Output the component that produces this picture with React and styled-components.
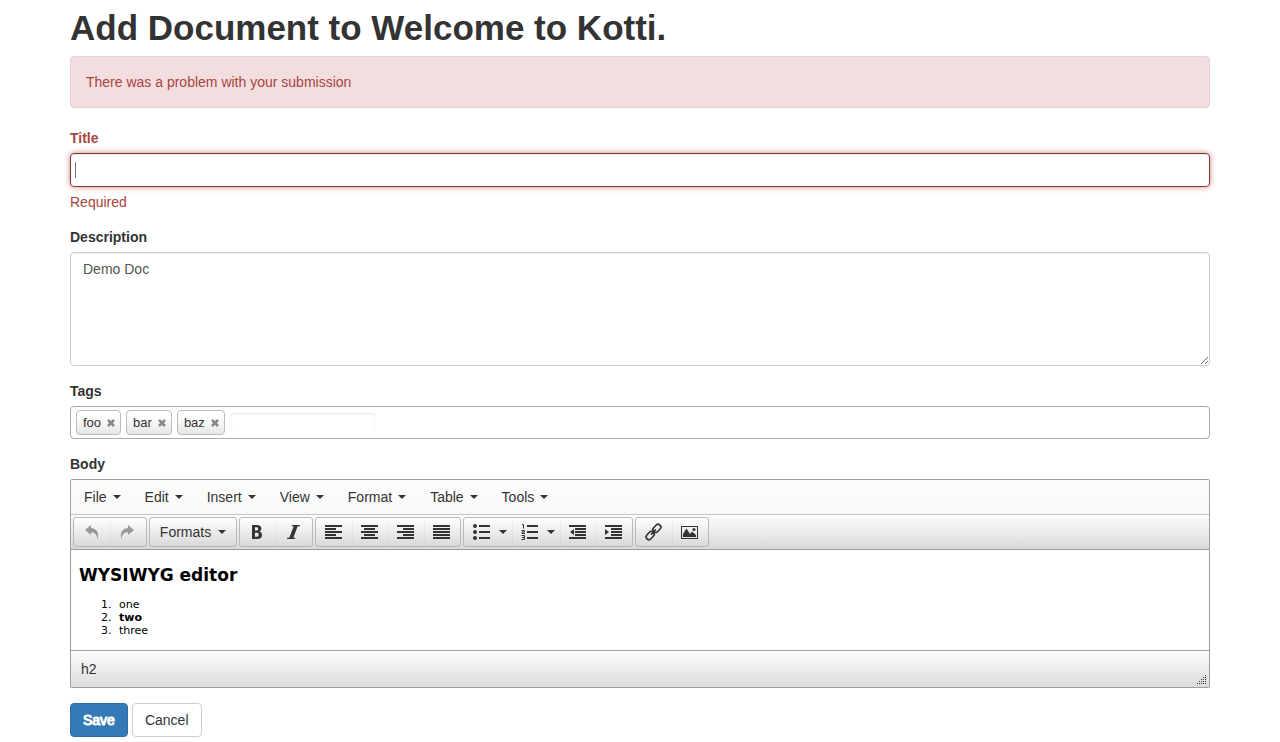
import React from "react";
import styled, { createGlobalStyle, css } from "styled-components";

const Global = createGlobalStyle`
  *, *::before, *::after { box-sizing: border-box; }
  body {
    margin: 0;
    background: #fff;
    color: #333;
    font-family: "Helvetica Neue", Helvetica, "Liberation Sans", Arial, sans-serif;
    font-size: 14px;
    line-height: 20px;
  }
  button, input, textarea { font-family: inherit; }
`;

const Container = styled.main`
  max-width: 1170px;
  margin: 0 auto;
  padding: 8px 15px 5px;
`;

const PageTitle = styled.h1`
  margin: 0 0 8px;
  font-size: 35px;
  line-height: 40px;
  font-weight: 700;
`;

const Alert = styled.div`
  margin-bottom: 20px;
  padding: 15px;
  border: 1px solid #ebccd1;
  border-radius: 4px;
  background: #f2dede;
  color: #a94442;
`;

const Group = styled.div`
  margin-bottom: 15px;
`;

const Label = styled.label`
  display: block;
  margin-bottom: 5px;
  font-weight: 700;
  color: ${(p) => (p.$error ? "#a94442" : "#333")};
`;

const Help = styled.p`
  margin: 5px 0 0;
  color: #a94442;
`;

const TitleField = styled.div`
  display: flex;
  align-items: center;
  height: 34px;
  padding: 0 4px;
  border: 1px solid #843534;
  border-radius: 4px;
  box-shadow: inset 0 1px 1px rgba(0, 0, 0, 0.075), 0 0 6px #ce8483;
`;

const Caret = styled.span`
  width: 1px;
  height: 16px;
  background: #777;
`;

const TitleInput = styled.input`
  flex: 1;
  min-width: 0;
  padding: 0;
  border: 0;
  outline: 0;
  background: transparent;
  color: #555;
  font-size: 14px;
`;

const TextArea = styled.textarea`
  display: block;
  width: 100%;
  height: 114px;
  padding: 6px 12px;
  border: 1px solid #ccc;
  border-radius: 4px;
  box-shadow: inset 0 1px 1px rgba(0, 0, 0, 0.075);
  color: #555;
  font-size: 14px;
  line-height: 20px;
  resize: vertical;
`;

const TagBox = styled.div`
  display: flex;
  align-items: center;
  gap: 5px;
  height: 33px;
  padding: 0 5px;
  border: 1px solid #aaa;
  border-radius: 4px;
`;

const Tag = styled.span`
  display: flex;
  align-items: center;
  gap: 6px;
  height: 25px;
  padding: 0 5px 0 6px;
  border: 1px solid #bbb;
  border-radius: 4px;
  background: linear-gradient(#fff 20%, #e6e6e6);
  font-size: 13px;
`;

const TagRemove = styled.button`
  display: flex;
  padding: 0;
  border: 0;
  background: none;
  color: #888;
`;

const TagInput = styled.input`
  width: 145px;
  height: 19px;
  border: 0;
  border-radius: 3px;
  outline: 0;
  box-shadow: inset 0 1px 2px rgba(0, 0, 0, 0.1);
  font-size: 13px;
`;

const Editor = styled.div`
  border: 1px solid #9e9e9e;
  border-radius: 2px;
`;

const MenuBar = styled.div`
  display: flex;
  height: 35px;
  padding: 0 1px;
  border-bottom: 1px solid #c4c4c4;
  background: linear-gradient(#fdfdfd, #f8f8f8);
`;

const MenuButton = styled.button`
  display: flex;
  align-items: center;
  gap: 6px;
  padding: 0 12px;
  border: 0;
  background: none;
  color: #333;
  font-size: 14px;
  line-height: 20px;
`;

const ToolBar = styled.div`
  display: flex;
  gap: 2px;
  padding: 2px;
  border-bottom: 1px solid #9e9e9e;
  background: linear-gradient(#fdfdfd, #d9d9d9);
`;

const ButtonGroup = styled.div`
  display: flex;
  height: 30px;
  border: 1px solid #b8b8b8;
  border-radius: 3px;
  background: linear-gradient(#fff, #d9d9d9);
`;

const sizes = {
  icon: css`width: 36px; padding-right: 1px;`,
  split: css`width: 48px; gap: 9px; padding-left: 4px;`,
  text: css`width: 86px;`,
};

const ToolButton = styled.button`
  display: flex;
  align-items: center;
  justify-content: center;
  gap: 7px;
  padding: 0;
  border: 0;
  background: none;
  color: #333;
  font-size: 14px;
  line-height: 20px;
  ${(p) => sizes[p.$size || "icon"]}
  &:disabled { color: #999; }
  & + & { box-shadow: inset 1px 0 rgba(0, 0, 0, 0.03); }
`;

const Content = styled.div`
  min-height: 100px;
  padding: 15px 8px 12px;
  background: #fff;
  color: #000;
  font-family: Verdana, "DejaVu Sans", sans-serif;
  font-size: 11px;
  line-height: 13px;
`;

const DocHeading = styled.h2`
  margin: 0 0 13px;
  font-size: 17px;
  line-height: 20px;
`;

const DocList = styled.ol`
  margin: 0;
  padding-left: 36px;
`;

const DocItem = styled.li`
  padding-left: 4px;
`;

const StatusBar = styled.div`
  display: flex;
  align-items: center;
  justify-content: space-between;
  height: 37px;
  padding: 0 3px 0 10px;
  border-top: 1px solid #9e9e9e;
  background: linear-gradient(#fdfdfd, #dcdcdc);
`;

const Grip = styled.svg`
  align-self: flex-end;
  margin-bottom: 3px;
`;

const Actions = styled.div`
  display: flex;
  gap: 4px;
`;

const Button = styled.button`
  height: 34px;
  padding: 0 12px;
  border: 1px solid ${(p) => (p.$primary ? "#2e6da4" : "#ccc")};
  border-radius: 4px;
  background: ${(p) => (p.$primary ? "#337ab7" : "#fff")};
  color: ${(p) => (p.$primary ? "#fff" : "#333")};
  font-size: 14px;
  line-height: 20px;
  -webkit-text-stroke: ${(p) => (p.$primary ? "1px #fff" : "0")};
`;

const Arrow = () => (
  <svg width="8" height="4" viewBox="0 0 8 4" fill="currentColor" aria-hidden="true">
    <path d="M0 0h8L4 4z" />
  </svg>
);

const icons = {
  undo: <path d="M2 6 8 1v3c5 .2 9 4.500 6.300 11.500C14.300 11.500 12.500 8.300 8 8.300V11z" />,
  redo: <path d="M15 6 9 1v3c-5 .2-9 4.500-6.300 11.500C2.700 11.500 4.500 8.300 9 8.300V11z" />,
  bold: (
    <path fillRule="evenodd" d="M3 1h5c2.800 0 4.300 1.200 4.300 3.600 0 1.500-.7 2.500-1.900 3C12 8.100 13 9.300 13 11c0 2.600-1.700 4-4.500 4H3zm3 2.300v3.300h1.300c1.300 0 1.900-.6 1.900-1.700s-.6-1.600-1.900-1.600zm0 5.500v3.900h1.600c1.400 0 2.100-.7 2.100-2s-.7-1.900-2.100-1.900z" />
  ),
  italic: <path d="M7 1h8l-.3 1.200h-2L8.300 13.800h2L10 15H2l.3-1.200h2L8.700 2.200h-2z" />,
  left: <path d="M0 1h17v2H0zM0 4h11v2H0zM0 7h17v2H0zM0 10h11v2H0zM0 13h17v2H0z" />,
  center: <path d="M0 1h17v2H0zM3 4h11v2H3zM0 7h17v2H0zM3 10h11v2H3zM0 13h17v2H0z" />,
  right: <path d="M0 1h17v2H0zM6 4h11v2H6zM0 7h17v2H0zM6 10h11v2H6zM0 13h17v2H0z" />,
  justify: <path d="M0 1h17v2H0zM0 4h17v2H0zM0 7h17v2H0zM0 10h17v2H0zM0 13h17v2H0z" />,
  bullets: (
    <>
      <path d="M6 1h11v2H6zM6 7h11v2H6zM6 13h11v2H6z" />
      <circle cx="2" cy="2" r="2" />
      <circle cx="2" cy="8" r="2" />
      <circle cx="2" cy="14" r="2" />
    </>
  ),
  numbers: (
    <>
      <path d="M6 1h11v2H6zM6 7h11v2H6zM6 13h11v2H6z" />
      <path d="M1 .5h1.500V4.500M.5 6.500H3.500v1.500H1v1.500h3M.5 11.500H3.500v4H.5M1 13.500h2" fill="none" stroke="currentColor" />
    </>
  ),
  outdent: <path d="M0 1h17v2H0zM6 4h11v2H6zM6 7h11v2H6zM6 10h11v2H6zM0 13h17v2H0zM5 5v6L1 8z" />,
  indent: <path d="M0 1h17v2H0zM6 4h11v2H6zM6 7h11v2H6zM6 10h11v2H6zM0 13h17v2H0zM0 5v6l4-3z" />,
  link: (
    <g fill="none" stroke="currentColor" strokeWidth="1.600" transform="rotate(-47 8.500 8)">
      <rect x="-1" y="5.200" width="9" height="5.600" rx="2.800" />
      <rect x="9" y="5.200" width="9" height="5.600" rx="2.800" />
      <path d="M5.500 8h6" strokeLinecap="round" />
    </g>
  ),
  image: (
    <>
      <path fillRule="evenodd" d="M0 2h17v13H0zm1 1v11h15V3z" />
      <path d="M2 13v-3l3.500-5.500L9 10l2-2.500 4 3.500v2z" />
      <circle cx="13" cy="5.500" r="1.500" />
    </>
  ),
};

const Icon = ({ name }) => (
  <svg width="17" height="16" viewBox="0 0 17 16" fill="currentColor" overflow="visible" aria-hidden="true">
    {icons[name]}
  </svg>
);

const menus = ["File", "Edit", "Insert", "View", "Format", "Table", "Tools"];

const tools = [
  [{ icon: "undo", label: "Undo", disabled: true }, { icon: "redo", label: "Redo", disabled: true }],
  [{ text: "Formats", label: "Formats", size: "text" }],
  [{ icon: "bold", label: "Bold" }, { icon: "italic", label: "Italic" }],
  [
    { icon: "left", label: "Align left" },
    { icon: "center", label: "Align center" },
    { icon: "right", label: "Align right" },
    { icon: "justify", label: "Justify" },
  ],
  [
    { icon: "bullets", label: "Bullet list", size: "split" },
    { icon: "numbers", label: "Numbered list", size: "split" },
    { icon: "outdent", label: "Decrease indent" },
    { icon: "indent", label: "Increase indent" },
  ],
  [{ icon: "link", label: "Insert link" }, { icon: "image", label: "Insert image" }],
];

const gripDots = [[8, 0], [6, 2], [8, 2], [4, 4], [6, 4], [8, 4], [2, 6], [4, 6], [6, 6], [8, 6], [0, 8], [2, 8], [4, 8], [6, 8], [8, 8]];

export default function App() {
  return (
    <>
      <Global />
      <Container>
        <PageTitle>Add Document to Welcome to Kotti.</PageTitle>
        <Alert role="alert">There was a problem with your submission</Alert>
        <form onSubmit={(e) => e.preventDefault()}>
          <Group>
            <Label htmlFor="title" $error>Title</Label>
            <TitleField>
              <Caret />
              <TitleInput id="title" type="text" aria-invalid="true" aria-describedby="title-error" />
            </TitleField>
            <Help id="title-error">Required</Help>
          </Group>
          <Group>
            <Label htmlFor="description">Description</Label>
            <TextArea id="description" defaultValue="Demo Doc" />
          </Group>
          <Group>
            <Label htmlFor="tags">Tags</Label>
            <TagBox>
              {["foo", "bar", "baz"].map((tag) => (
                <Tag key={tag}>
                  {tag}
                  <TagRemove type="button" aria-label={`Remove ${tag}`}>
                    <svg width="8" height="8" viewBox="0 0 8 8" stroke="currentColor" strokeWidth="2.500" aria-hidden="true">
                      <path d="M1 1l6 6M7 1L1 7" />
                    </svg>
                  </TagRemove>
                </Tag>
              ))}
              <TagInput id="tags" type="text" />
            </TagBox>
          </Group>
          <Group>
            <Label as="div" id="body-label">Body</Label>
            <Editor>
              <MenuBar>
                {menus.map((menu) => (
                  <MenuButton key={menu} type="button">{menu}<Arrow /></MenuButton>
                ))}
              </MenuBar>
              <ToolBar>
                {tools.map((group, i) => (
                  <ButtonGroup key={i}>
                    {group.map((tool) => (
                      <ToolButton key={tool.label} type="button" aria-label={tool.label} disabled={tool.disabled} $size={tool.size}>
                        {tool.icon ? <Icon name={tool.icon} /> : tool.text}
                        {tool.size && <Arrow />}
                      </ToolButton>
                    ))}
                  </ButtonGroup>
                ))}
              </ToolBar>
              <Content role="textbox" aria-labelledby="body-label" contentEditable suppressContentEditableWarning>
                <DocHeading>WYSIWYG editor</DocHeading>
                <DocList>
                  <DocItem>one</DocItem>
                  <DocItem><strong>two</strong></DocItem>
                  <DocItem>three</DocItem>
                </DocList>
              </Content>
              <StatusBar>
                h2
                <Grip width="9" height="9" viewBox="0 0 9 9" fill="#333" aria-hidden="true">
                  {gripDots.map(([x, y]) => <rect key={`${x}-${y}`} x={x} y={y} width="1" height="1" />)}
                </Grip>
              </StatusBar>
            </Editor>
          </Group>
          <Actions>
            <Button type="submit" $primary>Save</Button>
            <Button type="button">Cancel</Button>
          </Actions>
        </form>
      </Container>
    </>
  );
}
